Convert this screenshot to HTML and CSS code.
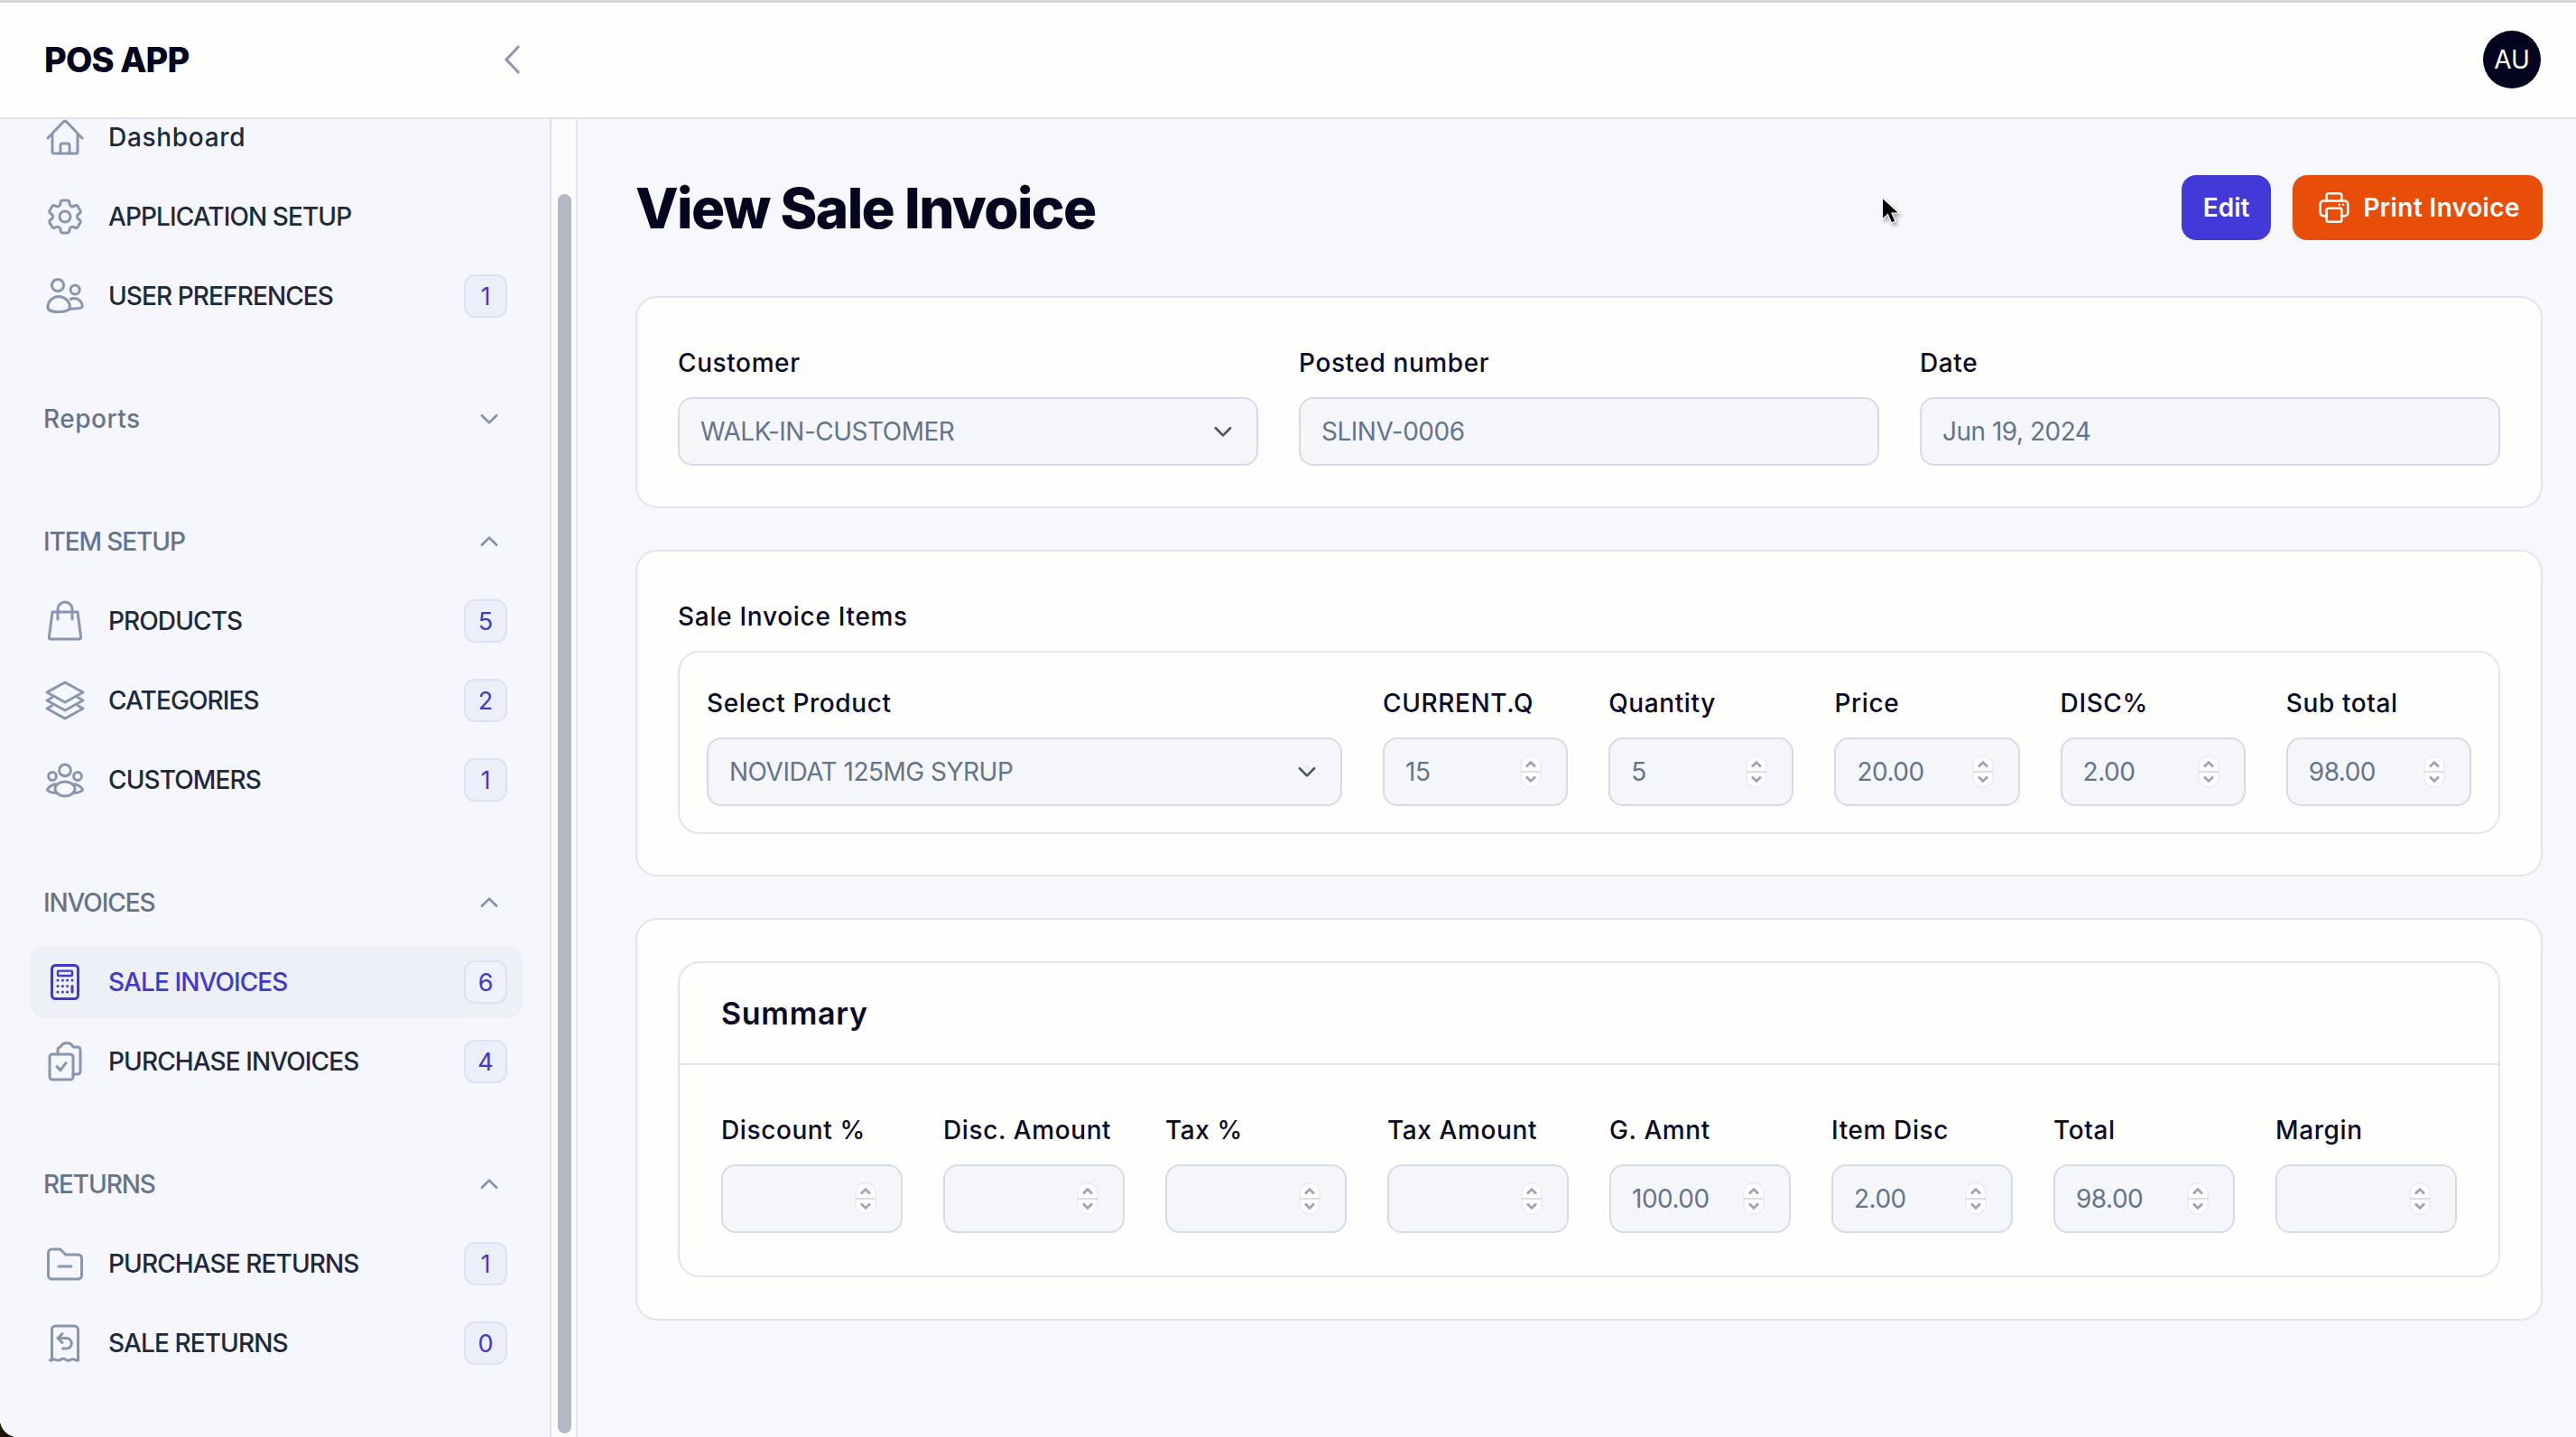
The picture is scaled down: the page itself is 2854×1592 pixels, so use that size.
FILE: index.html
```html
<!DOCTYPE html>
<html lang="en">
<head>
    <meta charset="UTF-8">
    <meta name="viewport" content="width=device-width, initial-scale=1.0">
    <title>View Sale Invoice</title>
    <link rel="stylesheet" href="styles.css">
</head>
<body>

    <svg class="sprites" width="0" height="0" aria-hidden="true">
        <symbol id="spinner" viewBox="0 0 24 36">
            <rect x="1" y="1" width="22" height="34" rx="10" fill="#fdfdfd" stroke="#e4e6ee"/>
            <path d="M1 18h22" stroke="#d0d3e0" stroke-width="1.5"/>
            <path d="M7 12.500 12 7.500l5 5M7 23.500l5 5 5-5" fill="none" stroke="#9aa0ba" stroke-width="2.600"/>
        </symbol>
        <symbol id="chevron-down" viewBox="0 0 24 24">
            <path d="M4.500 8.500 12 16l7.500-7.500" fill="none" stroke="currentColor" stroke-width="2.400" stroke-linecap="round" stroke-linejoin="round"/>
        </symbol>
        <symbol id="chevron-up" viewBox="0 0 24 24">
            <path d="M4.500 15.500 12 8l7.500 7.500" fill="none" stroke="currentColor" stroke-width="2.400" stroke-linecap="round" stroke-linejoin="round"/>
        </symbol>
    </svg>

    <div class="app">
        <header class="topbar">
            <div class="brand">
                <span class="brand-name">POS APP</span>
                <svg class="collapse-icon" viewBox="0 0 20 34"><path d="M17 2 3 17l14 15" fill="none" stroke="currentColor" stroke-width="3"/></svg>
            </div>
            <div class="avatar">AU</div>
        </header>

        <div class="workspace">
            <aside class="sidebar">
                <nav class="nav">
                    <div class="nav-group">
                        <a class="nav-item nav-item-plain">
                            <svg class="nav-icon" viewBox="0 0 24 24"><path d="M2.500 12.500 11 3.600a1.400 1.400 0 0 1 2 0l8.500 8.900M5 10.500V20a1 1 0 0 0 1 1h12a1 1 0 0 0 1-1v-9.500M9.500 21v-4.500a1 1 0 0 1 1-1h3a1 1 0 0 1 1 1V21"/></svg>
                            <span class="nav-label">Dashboard</span>
                        </a>
                        <a class="nav-item">
                            <svg class="nav-icon" viewBox="0 0 24 24"><path d="M9.594 3.940c.09-.542.56-.94 1.110-.94h2.593c.55 0 1.020.398 1.110.94l.213 1.281c.063.374.313.686.645.87.074.04.147.083.22.127.324.196.72.257 1.075.124l1.217-.456a1.125 1.125 0 0 1 1.370.49l1.296 2.247a1.125 1.125 0 0 1-.26 1.431l-1.003.827c-.293.24-.438.613-.431.992a6.759 6.759 0 0 1 0 .255c-.007.378.138.75.43.99l1.005.828c.424.35.534.954.26 1.430l-1.298 2.247a1.125 1.125 0 0 1-1.369.491l-1.217-.456c-.355-.133-.75-.072-1.076.124a6.570 6.570 0 0 1-.22.128c-.331.183-.581.495-.644.869l-.213 1.280c-.09.543-.56.941-1.110.941h-2.594c-.55 0-1.020-.398-1.110-.94l-.213-1.281c-.062-.374-.312-.686-.644-.87a6.520 6.520 0 0 1-.22-.127c-.325-.196-.72-.257-1.076-.124l-1.217.456a1.125 1.125 0 0 1-1.369-.49l-1.297-2.247a1.125 1.125 0 0 1 .26-1.431l1.004-.827c.292-.24.437-.613.43-.992a6.932 6.932 0 0 1 0-.255c.007-.378-.138-.75-.43-.99l-1.004-.828a1.125 1.125 0 0 1-.26-1.430l1.297-2.247a1.125 1.125 0 0 1 1.370-.491l1.216.456c.356.133.751.072 1.076-.124.072-.044.146-.087.22-.128.332-.183.582-.495.644-.869l.214-1.281z"/><circle cx="12" cy="12" r="3"/></svg>
                            <span class="nav-label">APPLICATION SETUP</span>
                        </a>
                        <a class="nav-item">
                            <svg class="nav-icon" viewBox="0 0 24 24"><circle cx="8" cy="6" r="3.300"/><circle cx="17.600" cy="8.500" r="2.500"/><path d="M2.500 18.200c0-3.400 2.800-6 6-6s6.200 2.600 6.200 6c0 1.600-2.600 2.600-6.200 2.600s-6-1-6-2.600z"/><path d="M15.200 13.700c.6-.3 1.200-.4 1.900-.4 2.600 0 4.500 1.900 4.500 4.300 0 1-1.500 1.400-6.700 1.500"/></svg>
                            <span class="nav-label">USER PREFRENCES</span>
                            <span class="badge">1</span>
                        </a>
                    </div>

                    <div class="nav-group">
                        <div class="group-head group-head-plain">
                            <span>Reports</span>
                            <svg class="group-chevron"><use href="#chevron-down"/></svg>
                        </div>
                    </div>

                    <div class="nav-group">
                        <div class="group-head">
                            <span>ITEM SETUP</span>
                            <svg class="group-chevron"><use href="#chevron-up"/></svg>
                        </div>
                        <a class="nav-item">
                            <svg class="nav-icon" viewBox="0 0 24 24"><path d="M5 7h14l1.800 14a1 1 0 0 1-1 1H4.200a1 1 0 0 1-1-1z"/><path d="M8 11V5.500a4 4 0 0 1 8 0V11"/></svg>
                            <span class="nav-label">PRODUCTS</span>
                            <span class="badge">5</span>
                        </a>
                        <a class="nav-item">
                            <svg class="nav-icon" viewBox="0 0 24 24"><path d="M12 2 22 7.500 12 13 2 7.500z"/><path d="M4.800 10.400 2 12l10 5.500L22 12l-2.800-1.600"/><path d="M4.800 14.900 2 16.500 12 22l10-5.500-2.800-1.600"/></svg>
                            <span class="nav-label">CATEGORIES</span>
                            <span class="badge">2</span>
                        </a>
                        <a class="nav-item">
                            <svg class="nav-icon" viewBox="0 0 24 24"><circle cx="12" cy="6.700" r="3.200"/><circle cx="5" cy="10" r="2.200"/><circle cx="19" cy="10" r="2.200"/><path d="M6.500 17c0-2.300 2.400-4 5.500-4s5.500 1.700 5.500 4c0 2-2.400 4-5.500 4s-5.500-2-5.500-4z"/><path d="M6.600 14.400c-2.200.6-3.900 1.700-4.400 3.200 1 1 2.600 1.500 4.500 1.700M17.400 14.400c2.200.6 3.900 1.700 4.400 3.200-1 1-2.600 1.500-4.500 1.700"/></svg>
                            <span class="nav-label">CUSTOMERS</span>
                            <span class="badge">1</span>
                        </a>
                    </div>

                    <div class="nav-group">
                        <div class="group-head">
                            <span>INVOICES</span>
                            <svg class="group-chevron"><use href="#chevron-up"/></svg>
                        </div>
                        <a class="nav-item active">
                            <svg class="nav-icon" viewBox="0 0 24 24"><rect x="4.750" y="2.750" width="14.500" height="18.500" rx="2"/><rect x="8" y="5.800" width="8" height="2.700" rx=".5" stroke-width="1.200"/><path d="M8 11h.01M10.700 11h.01M13.300 11h.01M16 11h.01M8 14.200h.01M10.700 14.200h.01M13.300 14.200h.01M8 17.500h.01M10.700 17.500h.01M13.300 17.500h.01M16 14.200v3.300"/></svg>
                            <span class="nav-label">SALE INVOICES</span>
                            <span class="badge">6</span>
                        </a>
                        <a class="nav-item">
                            <svg class="nav-icon" viewBox="0 0 24 24"><rect x="3.500" y="8" width="13" height="14" rx="1.500"/><path d="M8 8V5.500A1.500 1.500 0 0 1 9.500 4c.5-1.500 2-2.300 3.500-2.300S16 2.500 16.500 4H19a1.500 1.500 0 0 1 1.500 1.500v12A1.500 1.500 0 0 1 19 19h-2.500"/><path d="M7.500 14.800l2 2 3-4"/></svg>
                            <span class="nav-label">PURCHASE INVOICES</span>
                            <span class="badge">4</span>
                        </a>
                    </div>

                    <div class="nav-group">
                        <div class="group-head">
                            <span>RETURNS</span>
                            <svg class="group-chevron"><use href="#chevron-up"/></svg>
                        </div>
                        <a class="nav-item">
                            <svg class="nav-icon" viewBox="0 0 24 24"><path d="M2.750 6a2 2 0 0 1 2-2h4.600l3 3h6.900a2 2 0 0 1 2 2v9.500a2 2 0 0 1-2 2H4.750a2 2 0 0 1-2-2z"/><path d="M8.500 13.500h7"/></svg>
                            <span class="nav-label">PURCHASE RETURNS</span>
                            <span class="badge">1</span>
                        </a>
                        <a class="nav-item">
                            <svg class="nav-icon" viewBox="0 0 24 24"><path d="M4.750 21.500v-17a2 2 0 0 1 2-2h10.500a2 2 0 0 1 2 2v17c-1.200.5-2.200-.9-3.300-.6-1.200.4-2.200 1.200-3.300.4-1-.8-2.200-.8-3.200-.1-1.100.8-2.300.2-3.200-.2-.8-.3-1.600.2-2.500.5z"/><path d="M10.500 6.800 8 9.300l2.500 2.400M8 9.300h4.800a2.800 2.800 0 0 1 0 5.700h-2"/></svg>
                            <span class="nav-label">SALE RETURNS</span>
                            <span class="badge">0</span>
                        </a>
                    </div>
                </nav>
                <div class="scroll-track"><div class="scroll-thumb"></div></div>
            </aside>

            <main class="content">
                <div class="page-head">
                    <h1>View Sale Invoice</h1>
                    <div class="page-actions">
                        <button class="btn btn-edit" type="button">Edit</button>
                        <button class="btn btn-print" type="button">
                            <svg class="btn-icon" viewBox="0 0 24 24"><path d="M7 7.500V4a1.500 1.500 0 0 1 1.500-1.500h7A1.500 1.500 0 0 1 17 4v3.500"/><path d="M7 17.500H5a2.200 2.200 0 0 1-2.200-2.200V9.700A2.200 2.200 0 0 1 5 7.500h14a2.200 2.200 0 0 1 2.200 2.200v5.600a2.200 2.200 0 0 1-2.200 2.200h-2"/><rect x="7" y="12.500" width="10" height="9" rx="1.200"/><path d="M15.500 10h.01M18 10h.01"/></svg>
                            Print Invoice
                        </button>
                    </div>
                </div>

                <section class="card header-card">
                    <div class="field">
                        <div class="field-label">Customer</div>
                        <div class="input-box">
                            <span class="input-value">WALK-IN-CUSTOMER</span>
                            <svg class="select-chevron"><use href="#chevron-down"/></svg>
                        </div>
                    </div>
                    <div class="field">
                        <div class="field-label">Posted number</div>
                        <div class="input-box"><span class="input-value">SLINV-0006</span></div>
                    </div>
                    <div class="field">
                        <div class="field-label">Date</div>
                        <div class="input-box"><span class="input-value">Jun 19, 2024</span></div>
                    </div>
                </section>

                <section class="card">
                    <h2 class="card-title">Sale Invoice Items</h2>
                    <div class="items-box">
                        <div class="field">
                            <div class="field-label">Select Product</div>
                            <div class="input-box">
                                <span class="input-value">NOVIDAT 125MG SYRUP</span>
                                <svg class="select-chevron"><use href="#chevron-down"/></svg>
                            </div>
                        </div>
                        <div class="field">
                            <div class="field-label">CURRENT.Q</div>
                            <div class="input-box"><span class="input-value">15</span><svg class="spinner"><use href="#spinner"/></svg></div>
                        </div>
                        <div class="field">
                            <div class="field-label">Quantity</div>
                            <div class="input-box"><span class="input-value">5</span><svg class="spinner"><use href="#spinner"/></svg></div>
                        </div>
                        <div class="field">
                            <div class="field-label">Price</div>
                            <div class="input-box"><span class="input-value">20.00</span><svg class="spinner"><use href="#spinner"/></svg></div>
                        </div>
                        <div class="field">
                            <div class="field-label">DISC%</div>
                            <div class="input-box"><span class="input-value">2.00</span><svg class="spinner"><use href="#spinner"/></svg></div>
                        </div>
                        <div class="field">
                            <div class="field-label">Sub total</div>
                            <div class="input-box"><span class="input-value">98.00</span><svg class="spinner"><use href="#spinner"/></svg></div>
                        </div>
                    </div>
                </section>

                <section class="card summary-card">
                    <div class="summary-box">
                        <h3 class="summary-title">Summary</h3>
                        <div class="summary-grid">
                            <div class="field">
                                <div class="field-label">Discount %</div>
                                <div class="input-box"><span class="input-value"></span><svg class="spinner"><use href="#spinner"/></svg></div>
                            </div>
                            <div class="field">
                                <div class="field-label">Disc. Amount</div>
                                <div class="input-box"><span class="input-value"></span><svg class="spinner"><use href="#spinner"/></svg></div>
                            </div>
                            <div class="field">
                                <div class="field-label">Tax %</div>
                                <div class="input-box"><span class="input-value"></span><svg class="spinner"><use href="#spinner"/></svg></div>
                            </div>
                            <div class="field">
                                <div class="field-label">Tax Amount</div>
                                <div class="input-box"><span class="input-value"></span><svg class="spinner"><use href="#spinner"/></svg></div>
                            </div>
                            <div class="field">
                                <div class="field-label">G. Amnt</div>
                                <div class="input-box"><span class="input-value">100.00</span><svg class="spinner"><use href="#spinner"/></svg></div>
                            </div>
                            <div class="field">
                                <div class="field-label">Item Disc</div>
                                <div class="input-box"><span class="input-value">2.00</span><svg class="spinner"><use href="#spinner"/></svg></div>
                            </div>
                            <div class="field">
                                <div class="field-label">Total</div>
                                <div class="input-box"><span class="input-value">98.00</span><svg class="spinner"><use href="#spinner"/></svg></div>
                            </div>
                            <div class="field">
                                <div class="field-label">Margin</div>
                                <div class="input-box"><span class="input-value"></span><svg class="spinner"><use href="#spinner"/></svg></div>
                            </div>
                        </div>
                    </div>
                </section>
            </main>
        </div>

        <!-- mouse pointer caught in the screen recording -->
        <svg class="pointer" viewBox="0 0 22 32"><path d="M1.500 1v24l6-5.500 4 9.500 4.500-2-4-9h8z" fill="#000" stroke="#fff" stroke-width="1.200"/></svg>
    </div>

</body>
</html>
```

FILE: styles.css
```css
* {
    box-sizing: border-box;
}
html, body {
    height: 100%;
    margin: 0;
}
body {
    font-family: Inter, 'Noto Sans', sans-serif;
    font-size: 28px;
    color: #0b0b26;
    background-color: #1c1407;
    overflow: hidden;
}
.sprites {
    position: absolute;
}
.app {
    position: relative;
    height: 100%;
    display: flex;
    flex-direction: column;
    background-color: #f7f8fc;
    border-bottom-left-radius: 20px;
    overflow: hidden;
}

/* top bar */
.topbar {
    flex: none;
    height: 132px;
    display: flex;
    align-items: center;
    justify-content: space-between;
    padding: 0 39px 2px 0;
    background-color: #fefefc;
    border-top: 3px solid #d6d6d8;
    border-bottom: 2px solid #dfe2ec;
}
.brand {
    width: 640px;
    display: flex;
    align-items: center;
    justify-content: space-between;
    padding: 0 62px 0 49px;
}
.brand-name {
    font-size: 38px;
    font-weight: 800;
    letter-spacing: -.85px;
    color: #05051f;
}
.collapse-icon {
    width: 20px;
    height: 34px;
    color: #8a95b0;
}
.avatar {
    width: 64px;
    height: 64px;
    border-radius: 50%;
    display: flex;
    align-items: center;
    justify-content: center;
    background-color: #03031f;
    color: #fff;
    font-size: 28px;
}

.workspace {
    flex: 1;
    min-height: 0;
    display: flex;
}

/* sidebar */
.sidebar {
    flex: none;
    width: 640px;
    display: flex;
    border-right: 2px solid #e2e5ef;
    background-color: #fafbfd;
}
.nav {
    width: 611px;
    display: flex;
    flex-direction: column;
    gap: 56px;
    padding: 0 30px 0 33px;
    background-color: #f6f7fc;
    border-right: 2px solid #dfe2ec;
    overflow: hidden;
}
.nav-group {
    display: flex;
    flex-direction: column;
    gap: 8px;
}
/* list is scrolled a little, the first row sits under the top bar */
.nav-group:first-child {
    margin-top: -20px;
}
.nav-item {
    height: 80px;
    flex: none;
    display: flex;
    align-items: center;
    padding: 0 17px 0 15px;
    border-radius: 16px;
    color: #1e293b;
    font-weight: 500;
    letter-spacing: -.9px;
}
.nav-item-plain {
    letter-spacing: .7px;
}
.nav-icon {
    flex: none;
    width: 48px;
    height: 48px;
    margin-right: 24px;
    fill: none;
    stroke: #8896b0;
    stroke-width: 1.5;
    stroke-linecap: round;
    stroke-linejoin: round;
}
.nav-label {
    flex: 1;
}
.badge {
    flex: none;
    width: 48px;
    height: 48px;
    display: flex;
    align-items: center;
    justify-content: center;
    background-color: #eceffa;
    border: 2px solid #dde1f6;
    border-radius: 12px;
    color: #4338ca;
    font-size: 27px;
    font-weight: 400;
    letter-spacing: 0;
}
.nav-item.active {
    background-color: #eef0f7;
    color: #4338ca;
}
.nav-item.active .nav-icon {
    stroke: #4338ca;
}
.nav-item.active .badge {
    background-color: #f0f2fb;
}
.group-head {
    height: 80px;
    flex: none;
    display: flex;
    align-items: center;
    justify-content: space-between;
    padding: 0 24px 0 15px;
    color: #64748b;
    font-weight: 500;
    letter-spacing: -1.1px;
}
.group-head-plain {
    letter-spacing: .5px;
}
.group-chevron {
    width: 26px;
    height: 26px;
    color: #8390a8;
}
.scroll-track {
    flex: 1;
    padding: 83px 5px 4px 7px;
}
.scroll-thumb {
    width: 15px;
    height: 100%;
    border-radius: 8px;
    background-color: #b5b7c2;
}

/* main content */
.content {
    flex: 1;
    min-width: 0;
    padding: 62px 37px 0 64px;
    display: flex;
    flex-direction: column;
    gap: 46px;
}
.page-head {
    height: 72px;
    display: flex;
    align-items: center;
    justify-content: space-between;
    margin-bottom: 16px;
}
h1 {
    margin: 0;
    font-size: 62px;
    font-weight: 800;
    letter-spacing: -1.65px;
    color: #05051f;
}
.page-actions {
    display: flex;
    gap: 24px;
}
.btn {
    height: 72px;
    display: flex;
    align-items: center;
    padding: 0 24px;
    border: none;
    border-radius: 16px;
    color: #fff;
    font-family: inherit;
    font-size: 28px;
    font-weight: 600;
}
.btn-edit {
    background-color: #4338d8;
}
.btn-print {
    padding: 0 25px 0 26px;
    background-color: #e94e08;
    letter-spacing: .4px;
}
.btn-icon {
    width: 40px;
    height: 40px;
    margin-right: 12px;
    fill: none;
    stroke: #fff;
    stroke-width: 1.500;
    stroke-linecap: round;
    stroke-linejoin: round;
}
.card {
    background-color: #fefefd;
    border: 2px solid #e2e5ef;
    border-radius: 24px;
    padding: 46px 45px 45px;
}
.header-card {
    padding-top: 52px;
    display: grid;
    grid-template-columns: repeat(3, 1fr);
    gap: 45px;
}
.field {
    min-width: 0;
}
.field-label {
    line-height: 40px;
    margin-bottom: 18px;
    font-weight: 500;
    letter-spacing: .6px;
    color: #0b0b26;
    white-space: nowrap;
}
.input-box {
    height: 76px;
    display: flex;
    align-items: center;
    justify-content: space-between;
    padding: 0 27px 0 23px;
    background-color: #f5f6fa;
    border: 2px solid #d7dbe8;
    border-radius: 16px;
}
.input-value {
    color: #64748b;
    font-size: 28px;
    letter-spacing: -.5px;
    white-space: nowrap;
}
.select-chevron {
    width: 26px;
    height: 26px;
    margin-right: -3px;
    color: #4b5563;
}
.spinner {
    flex: none;
    width: 24px;
    height: 36px;
}
.card-title {
    margin: 0 0 12px;
    line-height: 52px;
    font-size: 28px;
    font-weight: 500;
    letter-spacing: .7px;
}
.items-box {
    display: grid;
    grid-template-columns: 704px repeat(5, 1fr);
    gap: 45px;
    padding: 36px 30px 29px;
    border: 2px solid #e2e5ef;
    border-radius: 24px;
}
.summary-card {
    padding-top: 46px;
    padding-bottom: 46px;
}
.summary-box {
    border: 2px solid #e2e5ef;
    border-radius: 24px;
}
.summary-title {
    margin: 0;
    height: 113px;
    display: flex;
    align-items: center;
    padding-left: 46px;
    font-size: 34px;
    font-weight: 600;
    letter-spacing: .7px;
    border-bottom: 2px solid #e2e5ef;
}
.summary-grid {
    display: grid;
    grid-template-columns: repeat(8, 1fr);
    gap: 45px;
    padding: 52px 46px 47px;
}
.pointer {
    position: absolute;
    left: 2084px;
    top: 218px;
    width: 22px;
    height: 32px;
    filter: drop-shadow(2px 3px 2px rgba(0, 0, 0, 0.35));
}
```
